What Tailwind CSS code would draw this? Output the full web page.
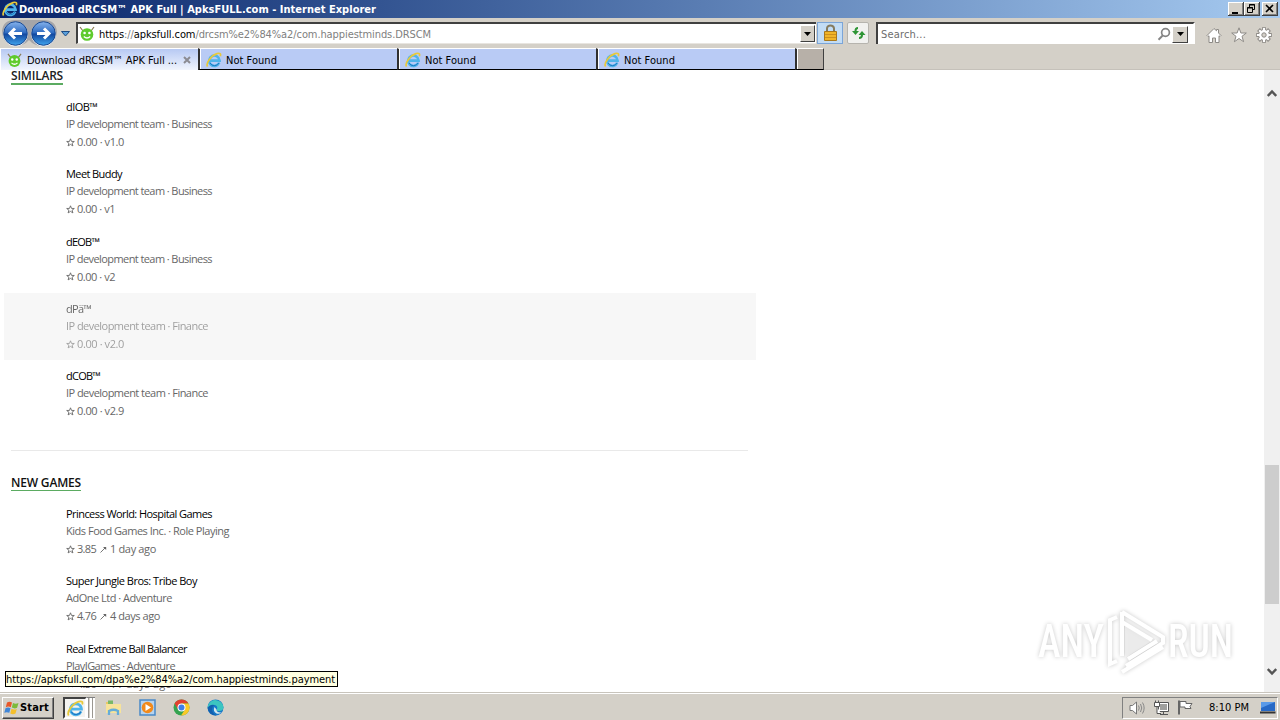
<!DOCTYPE html>
<html lang="en">
<head>
    <meta charset="UTF-8">
    <meta name="viewport" content="width=device-width, initial-scale=1.0">
    <title>Download dRCSM™ APK Full | ApksFULL.com</title>
    <script src="https://cdn.jsdelivr.net/npm/@tailwindcss/browser@4"></script>
</head>
<body class="w-[1280px] h-[720px] overflow-hidden bg-white flex flex-col relative text-[11px] leading-[14px] text-black font-['DejaVu_Sans_Condensed','DejaVu_Sans',sans-serif] [font-stretch:condensed]">

    <!-- shared icons -->
    <svg class="absolute w-0 h-0">
        <symbol id="ie" viewBox="0 0 16 16">
            <path d="M13.2 10.8A5.2 5.2 0 1 1 13.6 8.6H4.6" fill="none" stroke="#4fb4ea" stroke-width="2.6"/>
            <path d="M13.2 10.8A5.2 5.2 0 0 1 4 11" fill="none" stroke="#1c77c4" stroke-width="1"/>
            <path d="M1.6 14.6C-.6 11.500 5 3.500 11 1.600c3-.9 4.200.2 3.300 2.600" fill="none" stroke="#e8c93a" stroke-width="1.700"/>
        </symbol>
        <symbol id="droid" viewBox="0 0 16 16">
            <path d="M1 1l3 4M15 1l-3 4" stroke="#8a7a50" stroke-width="1.200"/>
            <circle cx="8" cy="8.500" r="6.300" fill="#5fcb2c"/>
            <circle cx="5.600" cy="7" r="1.300" fill="#fff"/><circle cx="10.400" cy="7" r="1.300" fill="#fff"/>
            <path d="M4.800 10.500q3.200 3 6.400 0" fill="none" stroke="#fff" stroke-width="1.300"/>
        </symbol>
        <symbol id="star" viewBox="0 0 9 9">
            <path d="M4.500 .8l1 2.600 2.800.1-2.200 1.700.8 2.700-2.400-1.500L2.100 7.900l.8-2.700L.7 3.500l2.800-.1z" fill="none" stroke="currentColor" stroke-width=".9"/>
        </symbol>
        <symbol id="trend" viewBox="0 0 7 7">
            <path d="M.5 6.500L5.500 1.500" fill="none" stroke="currentColor" stroke-width=".9"/><path d="M3 1h3.200v3z" fill="currentColor"/>
        </symbol>
        <linearGradient id="orb" x1="0" y1="0" x2="0" y2="1">
            <stop offset="0" stop-color="#86b3ec"/><stop offset=".48" stop-color="#2c69c0"/><stop offset=".52" stop-color="#12479f"/><stop offset="1" stop-color="#3fa4ee"/>
        </linearGradient>
    </svg>

    <!-- title bar -->
    <div class="h-[18px] shrink-0 flex items-center pl-[2px] pr-[2px] bg-linear-to-r from-[#0a246a] to-[#a6caf0] text-white font-bold">
        <svg class="w-4 h-4 mr-[1px]"><use href="#ie"/></svg>
        <span data-w="357" class="whitespace-pre pt-px">Download dRCSM™ APK Full | ApksFULL.com - Internet Explorer</span>
        <div class="ml-auto flex">
            <svg class="w-4 h-[14px]" viewBox="0 0 16 14"><path d="M0 0h16v14H0z" fill="#404040"/><path d="M0 0h15v13H0z" fill="#fff"/><path d="M1 1h14v12H1z" fill="#808080"/><path d="M1 1h13v11H1z" fill="#d4d0c8"/><path d="M4 10h6v2H4z" fill="#000"/></svg>
            <svg class="w-4 h-[14px]" viewBox="0 0 16 14"><path d="M0 0h16v14H0z" fill="#404040"/><path d="M0 0h15v13H0z" fill="#fff"/><path d="M1 1h14v12H1z" fill="#808080"/><path d="M1 1h13v11H1z" fill="#d4d0c8"/><path d="M5.500 5V2.500h5v5H9M5 3h6M3.500 5.500h5v5h-5zM3 6h6" fill="none" stroke="#000"/></svg>
            <svg class="w-4 h-[14px] ml-[2px]" viewBox="0 0 16 14"><path d="M0 0h16v14H0z" fill="#404040"/><path d="M0 0h15v13H0z" fill="#fff"/><path d="M1 1h14v12H1z" fill="#808080"/><path d="M1 1h13v11H1z" fill="#d4d0c8"/><path d="M4 3l7 7M11 3l-7 7" fill="none" stroke="#000" stroke-width="1.600"/></svg>
        </div>
    </div>

    <!-- navigation bar -->
    <div class="h-[30px] shrink-0 flex items-start bg-[#d4d0c8]">
        <svg class="w-[74px] h-[30px] shrink-0" viewBox="0 0 74 30">
            <path d="M2 13Q3 2 15 2H44Q56 2 57 14Q55 28 43 28Q34 28 29 22Q24 28 15 28Q3 27 2 13" fill="#a5a5a8"/>
            <circle cx="15.500" cy="16" r="12.300" fill="#fff"/><circle cx="43.500" cy="16" r="12.300" fill="#fff"/>
            <circle cx="15.500" cy="15.500" r="11.800" fill="url(#orb)" stroke="#16468f"/>
            <circle cx="43.500" cy="15.500" r="11.800" fill="url(#orb)" stroke="#16468f"/>
            <path d="M22 15.500H10M15 10.500l-5 5 5 5M37 15.500h12M44 10.500l5 5-5 5" fill="none" stroke="#fff" stroke-width="3"/>
            <path d="M61.500 13.500h8l-4 4.500z" fill="#5aa0dc" stroke="#1c4b84"/>
        </svg>
        <div class="mt-[4px] ml-[2px] w-[740px] h-[22px] shrink-0 flex items-center bg-white border-t-2 border-l-2 border-[#404040] border-b border-b-[#e8e5e0] pl-[1px] pr-[1px]">
            <svg class="w-4 h-4 mr-[4px]"><use href="#droid"/></svg>
            <span class="text-[#808080] whitespace-pre pt-[2px]" data-w="332"><span class="text-black">https</span>://<span class="text-black">apksfull.com</span>/drcsm%e2%84%a2/com.happiestminds.DRSCM</span>
            <div class="ml-auto w-[15px] h-[17px] flex items-center justify-center bg-[#d4d0c8] border border-t-white border-l-white border-r-[#404040] border-b-[#404040]">
                <svg class="w-[7px] h-[4px]" viewBox="0 0 7 4"><path d="M0 0h7L3.500 4z"/></svg>
            </div>
        </div>
        <div class="mt-[4px] ml-[1px] w-[26px] h-[22px] shrink-0 flex items-center justify-center bg-[#c2dcf5] border border-[#7ba5d8]">
            <svg class="w-[15px] h-[18px]" viewBox="0 0 15 18"><path d="M4 8V4.500a3.500 3 0 0 1 7 0V8" fill="none" stroke="#857b60" stroke-width="2"/><path d="M1.500 7.500h12v9h-12z" fill="#f0b428" stroke="#a8781c"/><path d="M2 10.500h11M2 13.500h11" stroke="#cd901c"/></svg>
        </div>
        <div class="mt-[4px] ml-[4px] w-[22px] h-[22px] shrink-0 flex items-center justify-center bg-[#f1f1ef] border border-[#b6b4ae] rounded-xs">
            <svg class="w-[15px] h-[14px]" viewBox="0 0 15 14"><path d="M7 2Q4.500 2 4.500 5M8 12q3 0 3-3" fill="none" stroke="#2e9535" stroke-width="2"/><path d="M1 5h7L4.500 9zM7.500 9h7L11 5z" fill="#2e9535"/></svg>
        </div>
        <div class="mt-[4px] ml-[7px] w-[319px] h-[22px] shrink-0 flex items-center bg-white border-t-2 border-l-2 border-[#404040] border-r-2 border-r-white pl-[3px] pr-[5px]">
            <span class="text-[#6d6d6d] pt-px" data-w="45">Search...</span>
            <svg class="ml-auto w-[14px] h-[14px] mr-[1px]" viewBox="0 0 14 14"><circle cx="8.500" cy="5.500" r="3.900" fill="none" stroke="#858585" stroke-width="1.700"/><path d="M5.800 8.400L1.500 12.700" stroke="#858585" stroke-width="2"/></svg>
            <div class="w-[16px] h-[17px] flex items-center justify-center bg-[#d4d0c8] border border-t-white border-l-white border-r-[#404040] border-b-[#404040]">
                <svg class="w-[7px] h-[4px]" viewBox="0 0 7 4"><path d="M0 0h7L3.500 4z"/></svg>
            </div>
        </div>
        <div class="mt-[9px] ml-[11px] flex gap-[9px] shrink-0">
            <svg class="w-4 h-4" viewBox="0 0 16 16"><path d="M1 8.500L8 1.500l2.500 2.300V2.500h2V6L15 8.500l-1 1-1-.7v6.700H9.500v-4.500h-3v4.500H3V8.800l-1 .7z" fill="#fff" stroke="#8d8a86"/></svg>
            <svg class="w-4 h-4" viewBox="0 0 16 16"><path d="M8 .8l1.900 5.200h5.400l-4.300 3.300 1.600 5.400L8 11.500l-4.600 3.200L5 9.300.7 6h5.400z" fill="#fff" stroke="#8d8a86"/></svg>
            <svg class="w-4 h-4" viewBox="0 0 16 16"><path d="M8 .2v15.600M.2 8h15.600M2.500 2.500l11 11M13.500 2.500l-11 11" stroke="#8d8a86" stroke-width="4"/><circle cx="8" cy="8" r="5.800" fill="#8d8a86"/><path d="M8 1v14M1 8h14M3.200 3.200l9.600 9.600M12.800 3.200l-9.600 9.600" stroke="#fff" stroke-width="2.200"/><circle cx="8" cy="8" r="4.900" fill="#fff"/><circle cx="8" cy="8" r="2.200" fill="#d4d0c8" stroke="#8d8a86"/></svg>
        </div>
    </div>

    <!-- tabs -->
    <div class="h-[22px] shrink-0 flex bg-[#d4d0c8] border-b border-[#c5c1ba]">
        <div class="w-[198px] h-[22px] flex items-center pl-[6px] border-t border-l border-white bg-linear-to-b from-[#b7c9f3] to-[#f1f5fd]">
            <svg class="w-[15px] h-[15px] mr-[5px] mt-px"><use href="#droid"/></svg>
            <span class="whitespace-pre pt-[2px]" data-w="150">Download dRCSM™ APK Full ...</span>
            <svg class="w-[8px] h-[8px] ml-[6px] mt-px" viewBox="0 0 8 8"><path d="M1 1l6 6M7 1L1 7" stroke="#8b8b92" stroke-width="2"/></svg>
        </div>
        <div id="tabs" class="flex"></div>
        <div class="w-[29px] h-[22px] bg-[#b7b0a8] border-t border-t-white border-l-2 border-l-[#303030] border-r border-r-[#404040] border-b border-b-black shadow-[inset_1px_0_0_#fff]"></div>
    </div>

    <!-- page -->
    <div class="h-[622px] shrink-0 flex">
        <main class="w-[1264px] h-[622px] overflow-hidden pl-[4px] text-[#666] font-['Open_Sans',sans-serif] [font-stretch:normal]">
            <div class="h-[21px] pl-[7px]">
                <h2 class="w-[52px] h-[15px] leading-[12px] text-[12px] font-semibold text-[#222] border-b-2 border-[#5bab61] whitespace-nowrap"><span data-w="52">SIMILARS</span></h2>
            </div>
            <div id="similars"></div>
            <div class="mt-[22.500px] ml-[7px] w-[737px] h-px bg-[#e9e9e9]"></div>
            <div class="h-[47px] pt-[24px] pl-[7px]">
                <h2 class="w-[70px] h-[16px] leading-[16px] text-[12px] font-semibold text-[#111] border-b border-[#5bab61] whitespace-nowrap"><span data-w="70">NEW GAMES</span></h2>
            </div>
            <div id="games"></div>
        </main>
        <div class="w-4 bg-[#f0f0f0] flex flex-col items-center">
            <svg class="mt-[18px] w-[10px] h-[10px]" viewBox="0 0 10 10"><path d="M.8 8L5 3.500 9.200 8" fill="none" stroke="#555" stroke-width="2.400"/></svg>
            <div class="mt-[367px] w-[14px] h-[139px] bg-[#cdcdcd]"></div>
            <svg class="mt-[62px] w-[10px] h-[10px]" viewBox="0 0 10 10"><path d="M.8 3L5 7.500 9.200 3" fill="none" stroke="#555" stroke-width="2.400"/></svg>
        </div>
    </div>

    <!-- taskbar -->
    <div class="h-[28px] shrink-0 flex items-center bg-[#d4d0c8] border-t border-[#c8c4bc] shadow-[inset_0_1px_0_#fff]">
        <div class="mt-[3px] ml-[2px] w-[52px] h-[22px] flex items-center bg-[#d4d0c8] border border-t-white border-l-white border-r-[#404040] border-b-[#404040] shadow-[inset_-1px_-1px_0_#808080] pl-[1px] font-bold">
            <svg class="w-4 h-4" viewBox="0 0 16 16"><path d="M3 2.500q2.500-1.500 5 0L6.800 7.200q-2.500-1.300-5 0z" fill="#e8582a"/><path d="M9 3q2.500 1.400 5.500 0l-1.400 4.800q-2.600 1.300-5.300-.2z" fill="#7cba3a"/><path d="M1.500 8.300q2.500-1.400 5 0L5.300 12.800q-2.500-1.300-5 0z" fill="#3f86d8"/><path d="M7.500 8.800q2.600 1.400 5.300.1l-1.300 4.600q-2.600 1.300-5.200-.1z" fill="#f4bf2c"/></svg>
            <span data-w="29">Start</span>
        </div>
        <div class="mt-[3px] ml-[9px] w-[24px] h-[22px] flex items-center justify-center bg-[#f4f3f0] border-2 border-t-[#404040] border-l-[#404040] border-r-white border-b-white">
            <svg class="w-[17px] h-[17px]"><use href="#ie"/></svg>
        </div>
        <div class="mt-[3px] w-[8px] h-[22px] flex justify-between border-y border-t-[#808080] border-b-white"><i class="w-px bg-white"></i><i class="w-px bg-[#9a9791]"></i><i class="w-[2px] bg-white"></i><i class="w-px bg-[#9a9791]"></i><i class="w-[2px] bg-white"></i></div>
        <svg class="mt-[2px] ml-[10px] w-[17px] h-[17px]" viewBox="0 0 17 17"><path d="M1 3h6l1 2h7v9H1z" fill="#e8c865"/><path d="M3 1.500h5V6H3z" fill="#79b867"/><path d="M1 5h15v9H1z" fill="#f7e39a"/><path d="M4 16v-4q4.500-2.500 9 0v4" fill="none" stroke="#65acd8" stroke-width="2.300"/></svg>
        <svg class="mt-[2px] ml-[17px] w-[17px] h-[17px]" viewBox="0 0 17 17"><path d="M1 1h15v15H1z" fill="#b7d3ee" stroke="#4a89c8" stroke-width="1.500"/><circle cx="8.500" cy="8.500" r="5.800" fill="#f28a1c"/><path d="M6.500 5l5.500 3.500L6.500 12z" fill="#fff"/></svg>
        <svg class="mt-[2px] ml-[17px] w-[17px] h-[17px]" viewBox="0 0 17 17"><circle cx="8.500" cy="8.500" r="8" fill="#34a350"/><path d="M1.600 4.500A8 8 0 0 1 15.400 4.500H8.500L5 10.500z" fill="#e2402f"/><path d="M15.400 4.500A8 8 0 0 1 8 16.500L12 10.500 8.500 4.500z" fill="#fbc927"/><circle cx="8.500" cy="8.500" r="4" fill="#fff"/><circle cx="8.500" cy="8.500" r="3" fill="#3f7fe8"/></svg>
        <svg class="mt-[2px] ml-[17px] w-[17px] h-[17px]" viewBox="0 0 17 17"><circle cx="8.500" cy="8.500" r="8" fill="#1678c8"/><path d="M.8 7A8 8 0 0 1 16.500 8.500Q16 12 12 12q-3 0-2-2 1-3-2-4-3.500-.5-7.200 3z" fill="#3cc5c0"/><path d="M7.500 8q-2 4 2 6.500 3 1 5-1-5 .5-5-3z" fill="#d4e6ee"/><path d="M.6 9Q3 5 7.500 6 4 8 5.500 12.500 7 16 10 16.300A8 8 0 0 1 .6 9" fill="#1360ae"/></svg>
        <div class="mt-[3px] ml-auto mr-[2px] w-[156px] h-[22px] flex items-center border border-t-[#808080] border-l-[#808080] border-r-white border-b-white">
            <svg class="ml-[6px] w-[16px] h-[16px]" viewBox="0 0 16 16"><path d="M1 5.500h2.500L7.500 2v12L3.500 10.500H1z" fill="#fff" stroke="#777"/><path d="M9.500 5.500q1.500 2.500 0 5M11.500 4q2.500 4 0 8M13.500 2.500q3.300 5.500 0 11" fill="none" stroke="#888"/></svg>
            <svg class="ml-[8px] w-[16px] h-[16px]" viewBox="0 0 16 16"><path d="M5.500 2.500h10v9h-10z" fill="#fff" stroke="#555"/><path d="M7 4h7v6H7z" fill="#9f9f9d"/><path d="M7 14.500h8M10.500 12v2" stroke="#555"/><path d="M1.500 2.500h5v4h-5zM2.500 .5v2M5.500 .5v2M4 7v6.500h4" fill="#fff" stroke="#555"/></svg>
            <svg class="ml-[8px] w-[16px] h-[16px]" viewBox="0 0 16 16"><path d="M2 .5v14" stroke="#666" stroke-width="2"/><path d="M3 1.500h6v2h6l-2 3 1 2H8v-1.500H3z" fill="#fff" stroke="#666"/></svg>
            <span class="ml-[16px] whitespace-nowrap" data-w="40">8:10 PM</span>
            <svg class="ml-[11px] w-[16px] h-[16px]" viewBox="0 0 16 16"><path d="M1 2h14v9H1z" fill="#2769c6"/><path d="M1 2h14l-14 6z" fill="#5a9ae8"/><path d="M0 12.500h15.500" stroke="#333" stroke-width="2"/></svg>
        </div>
    </div>

    <!-- link status -->
    <div class="absolute left-[5px] top-[671px] w-[333px] h-[16px] bg-[#ffffe1] border border-black leading-[16px] whitespace-nowrap"><span data-w="329">https://apksfull.com/dpa%e2%84%a2/com.happiestminds.payment</span></div>

    <!-- watermark -->
    <svg class="absolute left-[1030px] top-[602px] w-[210px] h-[76px] drop-shadow-[0_0_2px_#00000038]" viewBox="0 0 210 76" font-family="Roboto, sans-serif" font-size="47" font-weight="500" fill="#fff">
        <text x="8" y="55" textLength="66" lengthAdjust="spacingAndGlyphs">ANY</text>
        <text x="138" y="55" textLength="65" lengthAdjust="spacingAndGlyphs">RUN</text>
        <path d="M95 22v34l28-18z" fill="#f3f3f3" opacity=".6"/>
        <path d="M87 15l-7 3v44l7-3M92 10v44M92 10l41 25v6L96 64M98 57l29-18M92 70l41-25M92 20l30 18" fill="none" stroke="#fff" stroke-width="4"/>
    </svg>

    <script>
        const similars = [
            { name: "dIOB™", w: 31, by: "IP development team · Business", bw: 146, rate: "0.00 · v1.0", rw: 47 },
            { name: "Meet Buddy", w: 56, by: "IP development team · Business", bw: 146, rate: "0.00 · v1", rw: 38 },
            { name: "dEOB™", w: 33, by: "IP development team · Business", bw: 146, rate: "0.00 · v2", rw: 38 },
            { name: "dPä™", w: 25, by: "IP development team · Finance", bw: 142, rate: "0.00 · v2.0", rw: 47, hover: true },
            { name: "dCOB™", w: 34, by: "IP development team · Finance", bw: 142, rate: "0.00 · v2.9", rw: 47 }
        ];
        const games = [
            { name: "Princess World: Hospital Games", w: 146, by: "Kids Food Games Inc. · Role Playing", bw: 163, rate: "3.85", rw: 19, age: "1 day ago", aw: 46 },
            { name: "Super Jungle Bros: Tribe Boy", w: 131, by: "AdOne Ltd · Adventure", bw: 106, rate: "4.76", rw: 19, age: "4 days ago", aw: 50 },
            { name: "Real Extreme Ball Balancer", w: 121, by: "PlayIGames · Adventure", bw: 109, rate: "4.50", rw: 19, age: "11 days ago", aw: 62 }
        ];

        function row(a) {
            return `
            <div class="w-[752px] h-[67.3px] pl-[62px] pt-[7.2px] whitespace-nowrap ${a.hover ? "bg-[#f7f7f7]" : ""}">
                <div class="${a.hover ? "opacity-60" : ""}">
                    <div class="h-[17px] leading-[17px] text-black"><span data-w="${a.w}">${a.name}</span></div>
                    <div class="h-[17px] leading-[17px]"><span data-w="${a.bw}">${a.by}</span></div>
                    <div class="h-[20px] leading-[18px] flex items-center">
                        <svg class="w-[9px] h-[9px] mr-[2px]"><use href="#star"/></svg>
                        <span data-w="${a.rw}">${a.rate}</span>
                        ${a.age ? `<svg class="w-[7px] h-[7px] ml-[4px] mr-[3px]"><use href="#trend"/></svg><span data-w="${a.aw}">${a.age}</span>` : ""}
                    </div>
                </div>
            </div>`;
        }

        document.getElementById("similars").innerHTML = similars.map(row).join("");
        document.getElementById("games").innerHTML = games.map(row).join("");
        document.getElementById("tabs").innerHTML = [1, 2, 3].map(() => `
            <div class="w-[199px] h-[22px] flex items-center pl-[6px] bg-[#b9cbf5] border-t border-t-white border-l-2 border-l-[#303030] border-b border-b-black shadow-[inset_1px_0_0_#fff]">
                <svg class="w-[16px] h-[16px] mr-[4px] mt-px"><use href="#ie"/></svg>
                <span class="pt-[3px]" data-w="51">Not Found</span>
            </div>`).join("");

        // spread the letters of each label over its own width
        function fit() {
            document.querySelectorAll("[data-w]").forEach(el => {
                el.style.letterSpacing = "0px";
                const natural = el.getBoundingClientRect().width;
                el.style.letterSpacing = (el.dataset.w - natural) / el.textContent.length + "px";
            });
        }
        window.addEventListener("load", fit);
        new ResizeObserver(fit).observe(document.body);
    </script>

</body>
</html>
